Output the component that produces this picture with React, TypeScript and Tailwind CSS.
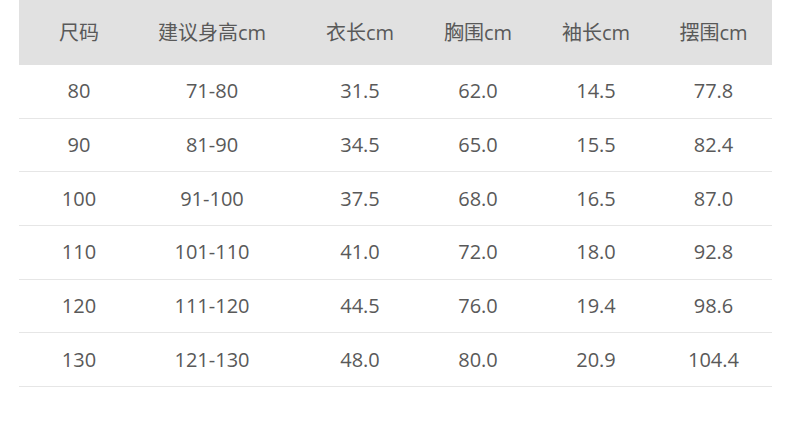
const headers = ["尺码", "建议身高cm", "衣长cm", "胸围cm", "袖长cm", "摆围cm"];

const rows = [
  ["80", "71-80", "31.5", "62.0", "14.5", "77.8"],
  ["90", "81-90", "34.5", "65.0", "15.5", "82.4"],
  ["100", "91-100", "37.5", "68.0", "16.5", "87.0"],
  ["110", "101-110", "41.0", "72.0", "18.0", "92.8"],
  ["120", "111-120", "44.5", "76.0", "19.4", "98.6"],
  ["130", "121-130", "48.0", "80.0", "20.9", "104.4"],
];

const grid = "grid grid-cols-[104px_178px_118px_118px_118px_117px]";

export default function App() {
  return (
    <div
      className="w-[790px] h-[431px] bg-white text-[#595959] text-[20px]"
      style={{ fontFamily: '"Open Sans", "Noto Sans CJK SC", sans-serif' }}
    >
      <div className="ml-[19px] w-[753px]">
        <div className={`${grid} h-[65px] items-center bg-[#e1e1e1]`}>
          {headers.map((h, i) => (
            <div key={h} className={`text-center ${i === 0 ? "pl-[16px]" : ""}`}>
              {h}
            </div>
          ))}
        </div>
        {rows.map((r) => (
          <div key={r[0]} className={`${grid} h-[53.7px] items-center border-b border-[#e6e6e6]`}>
            {r.map((c, i) => (
              <div key={i} className={`text-center ${i === 0 ? "pl-[16px]" : ""}`}>
                {c}
              </div>
            ))}
          </div>
        ))}
      </div>
    </div>
  );
}
